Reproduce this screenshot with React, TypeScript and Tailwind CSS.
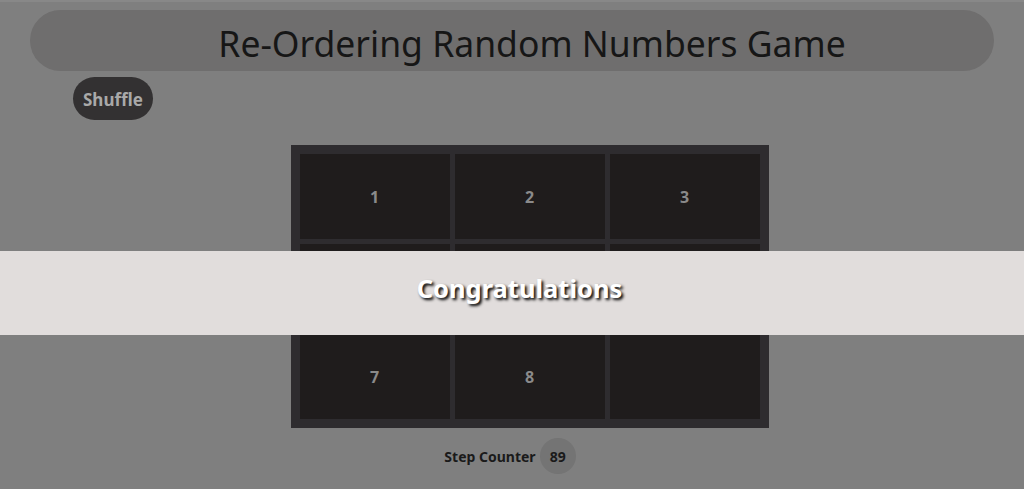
export default function App() {
  const tiles = ["1", "2", "3", "4", "5", "6", "7", "8", ""];

  return (
    <div
      className="relative min-h-[489px] w-full overflow-hidden bg-[#7f7f7f]"
      style={{ fontFamily: '"Noto Sans", "Open Sans", sans-serif' }}
    >
      <div className="h-[2px] bg-[#888888]" />
      <div className="mx-[30px] mt-[8px] flex h-[61px] items-center justify-center rounded-full bg-[#6f6e6e] pl-[40px] pt-[6px]">
        <h1 className="text-[35.5px] font-normal leading-none text-[#161616]">
          Re-Ordering Random Numbers Game
        </h1>
      </div>

      <div className="ml-[73px] mt-[6px]">
        <button className="h-[43px] rounded-full bg-[#333132] px-[10px] pt-[2px] text-[17px] font-bold text-[#a9a9a9]">
          Shuffle
        </button>
      </div>

      <div className="mt-[25px] flex justify-center pl-[35px]">
        <div className="grid grid-cols-[repeat(3,150px)] grid-rows-[repeat(3,85px)] gap-[5px] bg-[#2e2c2f] p-[9px]">
          {tiles.map((t, i) => (
            <div
              key={i}
              className="flex items-center justify-center bg-[#1f1c1c] text-[16px] font-bold text-[#8a8a8a]"
            >
              {t}
            </div>
          ))}
        </div>
      </div>

      <div className="mt-[10px] flex items-center justify-center gap-[4px] pr-[4px]">
        <span className="text-[14px] font-bold text-[#1a1a1a]">Step Counter</span>
        <span className="flex h-[36px] w-[36px] items-center justify-center rounded-full bg-[#747474] text-[14px] font-bold text-[#1a1a1a]">
          89
        </span>
      </div>

      <div className="absolute left-0 right-0 top-[251px] flex h-[84px] items-center justify-center bg-[#e1dddc] pb-[10px] pl-[15px]">
        <span className="text-[25.5px] font-bold text-white [text-shadow:2px_2px_3px_#000]">
          Congratulations
        </span>
      </div>
    </div>
  );
}
